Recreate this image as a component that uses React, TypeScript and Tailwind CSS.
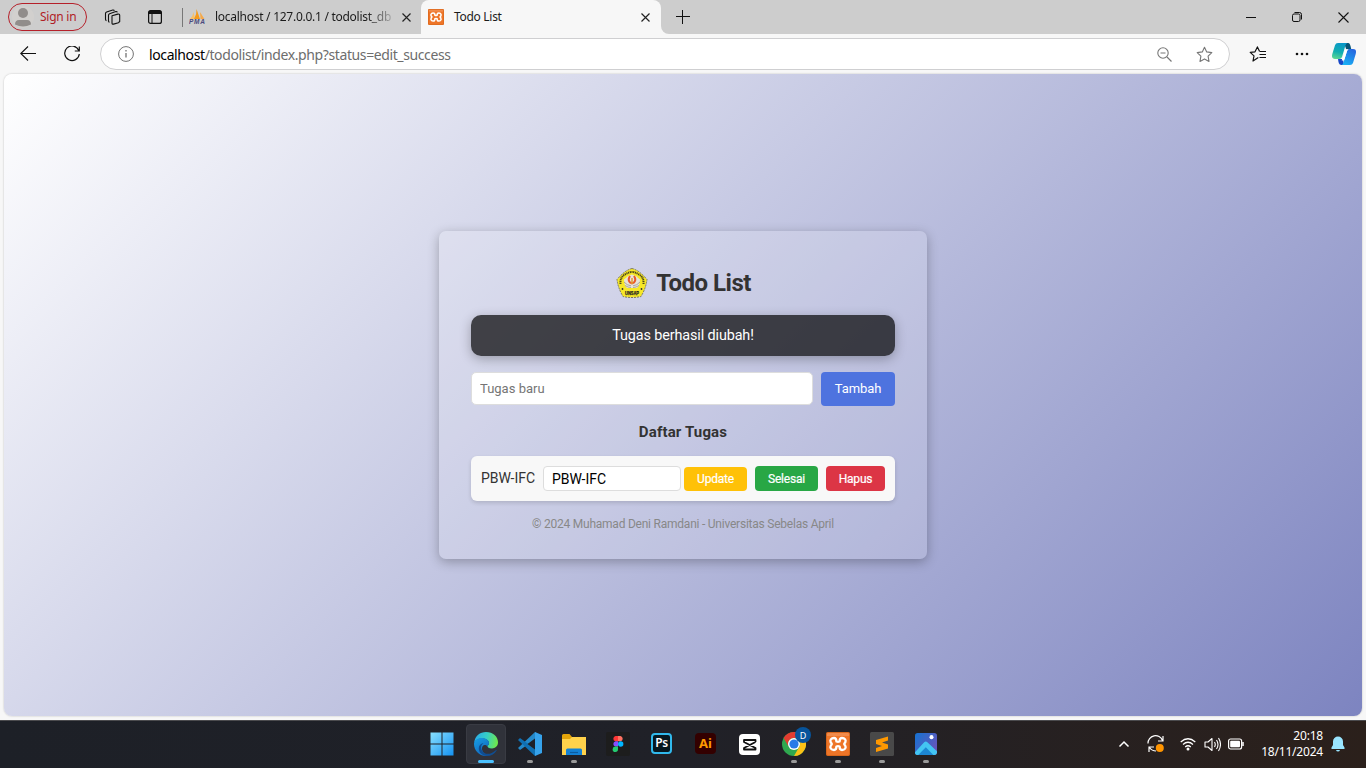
import type { ReactNode } from "react";

function Svg({ size = 24, box = 24, children, className = "" }: { size?: number; box?: number; children: ReactNode; className?: string }) {
  return (
    <svg width={size} height={size} viewBox={`0 0 ${box} ${box}`} fill="none" className={`shrink-0 ${className}`}>
      {children}
    </svg>
  );
}

function Xampp({ size }: { size: number }) {
  return (
    <Svg size={size}>
      <rect width="24" height="24" rx="2" fill="#ee7528" />
      <path d="M1 1h22v3H1Z" fill="#f39a62" opacity=".6" />
      <rect x="0.5" y="0.5" width="23" height="23" rx="1.5" stroke="#c95b12" strokeOpacity=".6" />
      <path d="M8 6C5 6 3.800 8.200 4.600 10c.4 1 1.200 1.300 1.200 2s-.8 1-1.200 2C3.800 15.800 5 18 8 18c2.300 0 2.400-2.200 2.400-3.500q1.600-.6 3.200 0C13.600 15.800 13.700 18 16 18c3 0 4.200-2.200 3.400-4-.4-1-1.200-1.300-1.200-2s.8-1 1.200-2C20.200 8.200 19 6 16 6c-2.300 0-2.400 2.200-2.400 3.500q-1.600.6-3.200 0C10.400 8.200 10.300 6 8 6Z" stroke="#fff" strokeWidth="2.300" strokeLinejoin="round" />
    </Svg>
  );
}

function Close() {
  return (
    <Svg size={9} box={9}>
      <path d="M.5.5l8 8M8.500.5l-8 8" stroke="#222" strokeWidth="1.150" />
    </Svg>
  );
}

function TabStrip() {
  return (
    <div className="flex h-[34px] bg-[#cdcdcd] text-[12px] text-[#1b1b1b]">
      <div className="flex w-[182px] items-center pl-2">
        <div className="flex h-7 w-[79px] items-center rounded-full border border-[#b5202a] pl-[3px] text-[#b01e26]">
          <Svg size={22} box={22}>
            <circle cx="11" cy="11" r="11" fill="#d2d0ce" />
            <circle cx="11" cy="7" r="5" fill="#918d8b" />
            <path d="M3 18.500q0-4.500 4-4.500h8q4 0 4 4.500-8 4-16 0Z" fill="#918d8b" />
          </Svg>
          <span className="ml-[6px] whitespace-nowrap tracking-[-0.25px]">Sign in</span>
        </div>
        <Svg size={18} box={18} className="ml-[17px]">
          <g stroke="#111" strokeWidth="1.100" strokeLinejoin="round">
            <path d="M8 7.800l5.800-1.700q1.700-.3 1.900 1.200v6.200l-1.200 1.200-5 1.400q-1.500.3-1.500-1.200Z" />
            <path d="M5.500 14.200q-1-.3-1-1.300V7.200q0-1.100 1.100-1.500l6.200-2.100q1.300-.2 1.500.8" />
            <path d="M2.500 12.600q-1-.3-1-1.300V5.600q0-1.100 1.100-1.500L8.800 2q1.300-.2 1.500.8" />
          </g>
        </Svg>
        <Svg size={14} box={14} className="ml-[26px]">
          <rect x=".6" y=".6" width="12.800" height="12.800" rx="2" stroke="#111" strokeWidth="1.200" />
          <path d="M.6 3.200V2.500Q.6.600 2.500.600h9q1.900 0 1.900 1.900v1.500H.6Z" fill="#111" />
          <path d="M4 4v9" stroke="#111" />
        </Svg>
      </div>
      <div className="flex w-[239px] items-center">
        <div className="h-[19px] w-px bg-[#777]" />
        <svg width="16" height="16" viewBox="0 0 16 16" className="ml-[6px] shrink-0">
          <path d="M1 10Q4 7 4.500 3L6 10Z" fill="#f8c16a" /><path d="M5 10Q8 5 7.500 0l3.500 10Z" fill="#f59a1c" /><path d="M11 3l4.500 7h-4Z" fill="#f5a94a" />
          <text x="0" y="15.200" textLength="16" fontFamily="Liberation Sans" fontSize="6.500" fontWeight="700" fontStyle="italic" fill="#4a4a7d">PMA</text>
        </svg>
        <span className="ml-[10px] w-[177px] whitespace-nowrap bg-linear-to-r from-[#1b1b1b] from-85% to-[#aaa] bg-clip-text tracking-[-0.27px] text-transparent">localhost / 127.0.0.1 / todolist_db</span>
        <span className="ml-[10px]"><Close /></span>
      </div>
      <div className="flex w-[240px] items-center rounded-t-lg bg-[#f7f7f7] pl-[7px]">
        <Xampp size={16} />
        <span className="ml-[10px] w-[187px] tracking-[-0.3px]">Todo List</span>
        <Close />
      </div>
      <div className="flex flex-1 items-center bg-[#f7f7f7]">
        <div className="flex h-full flex-1 items-center rounded-bl-lg bg-[#cdcdcd] pl-[15px]">
          <Svg size={14} box={14}><path d="M6.500 0v14M0 6.500h14" stroke="#111" strokeWidth="1" /></Svg>
          <div className="ml-auto flex items-center pr-[17px]">
            <Svg size={10} box={10}><path d="M0 5.500h10" stroke="#111" /></Svg>
            <Svg size={10} box={10} className="ml-[36px]">
              <rect x=".5" y="2" width="7.500" height="7.500" rx="1.500" stroke="#111" />
              <path d="M2.500.5H7.500Q9.500.5 9.500 2.500v5" stroke="#111" />
            </Svg>
            <Svg size={11} box={11} className="ml-[36px]"><path d="M.5.5l10 10M10.500.5l-10 10" stroke="#111" strokeWidth="1.100" /></Svg>
          </div>
        </div>
      </div>
    </div>
  );
}

const STAR = "M8.500 1.200l2.200 4.700 5.100.7-3.700 3.600.9 5.200-4.500-2.500L4 15.400l.9-5.200L1.200 6.600l5.100-.7Z";

function AddressBar() {
  return (
    <div className="flex h-10 items-center bg-[#f7f7f7]">
      <Svg size={16} box={16} className="ml-5"><path d="M16 7.500H.8M8 .5L.8 7.500 8 14.500" stroke="#111" strokeWidth="1.100" /></Svg>
      <Svg size={16} box={16} className="ml-7">
        <path d="M14.800 4.500A7.300 7.300 0 1 0 15.300 8M15.300.5v4.500h-4.500" stroke="#111" strokeWidth="1.200" />
      </Svg>
      <div className="ml-5 flex h-8 w-[1130px] items-center rounded-full border border-[#cfcfd1] bg-white">
        <Svg size={16} box={16} className="ml-[17px]">
          <circle cx="8" cy="8" r="7.400" stroke="#737373" />
          <path d="M8 7v4.500M8 4v1.500" stroke="#737373" strokeWidth="1.300" />
        </Svg>
        <span className="ml-[15px] whitespace-nowrap text-[14px] tracking-[-0.39px] text-[#6d6d6d]"><span className="text-black">localhost</span>/todolist/index.php?status=edit_success</span>
        <Svg size={15} box={15} className="ml-auto">
          <circle cx="6" cy="6" r="5.200" stroke="#777" strokeWidth="1.100" />
          <path d="M3.500 6h5M10 10l4.500 4.500" stroke="#777" strokeWidth="1.200" />
        </Svg>
        <Svg size={17} box={17} className="mr-[16px] ml-[24px]"><path d={STAR} stroke="#777" strokeWidth="1.100" strokeLinejoin="round" /></Svg>
      </div>
      <Svg size={17} box={17} className="ml-[19px]">
        <path d="M9.300 11.500L4 15l1-5.100L1.200 6.400l4.800-.6 2.400-4.900 2.100 4.400" stroke="#111" strokeWidth="1.200" strokeLinejoin="round" />
        <path d="M10.500 5.500H17M10.500 8.500H17M10.500 11.500H17" stroke="#111" strokeWidth="1.200" />
      </Svg>
      <Svg size={14} box={14} className="ml-[29px]">
        <g fill="#111"><circle cx="2" cy="7" r="1.300" /><circle cx="7" cy="7" r="1.300" /><circle cx="12" cy="7" r="1.300" /></g>
      </Svg>
      <Svg size={24} className="ml-[23px]">
        <defs>
          <linearGradient id="cpa" x1="6" y1="0" x2="2" y2="17" gradientUnits="userSpaceOnUse"><stop stopColor="#0896c9" /><stop offset=".55" stopColor="#12aeb0" /><stop offset="1" stopColor="#62d991" /></linearGradient>
          <linearGradient id="cpb" x1="21" y1="7" x2="12" y2="23" gradientUnits="userSpaceOnUse"><stop stopColor="#2664df" /><stop offset="1" stopColor="#18b4f5" /></linearGradient>
        </defs>
        <path d="M12 1h4.500q1.300 0 2 3l.8 3.500h-5Z" fill="#075577" />
        <path d="M6 1h9.300q-1.300.7-1.800 2.300L10 15q-.7 2-2.700 2H3Q-1 17 .3 12L3 3.200Q3.700 1 6 1Z" fill="url(#cpa)" />
        <path d="M6 17h5l1 6H9.500Q7 23 6.500 20Z" fill="#1647c7" />
        <path d="M18 23H9.500q1.500-.5 2-2.500L15 9q.7-2 2.500-2H21q4 0 2.700 5L21 21q-.7 2-3 2Z" fill="url(#cpb)" />
        <path d="M14.500 7.300h2q-1 .5-1.500 2l-2.600 8q-.4 1.200-1.700 1.300h-1l.5-1.800Q10.800 16 11.300 14.500L13 8.500q.4-1.200 1.500-1.200Z" fill="#fff" />
      </Svg>
    </div>
  );
}

function Emblem() {
  return (
    <svg width="32" height="32" viewBox="0 0 32 32" className="shrink-0">
      <path d="M16 1.500Q23 3 31 12.500 30 21 25 29.500 16 31.500 7 29.500 2 21 1 12.500 9 3 16 1.500Z" fill="#f6e727" stroke="#77745e" strokeWidth="1" strokeDasharray="2 1" />
      <path d="M4.500 17Q4 10 9 7.500q4-2.500 7-2.500t7 2.500q5 2.500 4.500 9.500" fill="none" stroke="#49451c" strokeWidth="2" strokeDasharray="1.200 .6" />
      <path d="M8 12.500q4-4 8-5 4 1 8 5 0 6-3 8.500H11q-3-2.500-3-8.500Z" fill="#e6e3da" />
      <path d="M8 15q3 3.500 7 3.800M9 18.500q3 2 6 2M24 15q-3 3.500-7 3.800M23 18.500q-3 2-6 2" stroke="#99968f" strokeWidth=".8" fill="none" />
      <path d="M14 9q-2.500 3.800 0 6.500l2 1 2-1q2.500-2.700 0-6.500" fill="none" stroke="#e9592b" strokeWidth="2" />
      <path d="M16 11v6" stroke="#df9e35" strokeWidth="1.500" />
      <circle cx="6.500" cy="22" r=".9" fill="#333" /><circle cx="25.500" cy="22" r=".9" fill="#333" />
      <text x="9" y="28" textLength="14" lengthAdjust="spacingAndGlyphs" fontSize="5" fontFamily="Liberation Sans" fontWeight="700" fill="#222" stroke="#222" strokeWidth=".25">UNSAP</text>
    </svg>
  );
}

function TodoCard() {
  return (
    <div className="flex h-[328px] w-[488px] flex-col rounded-[7px] bg-white/15 px-8 font-['Roboto',sans-serif] shadow-[0_3px_12px_rgba(0,0,0,0.28)]">
      <div className="mt-9 flex h-8 items-center justify-center gap-2 pl-px">
        <Emblem />
        <h1 className="text-[24px] font-bold tracking-[-0.5px] text-[#333]">Todo List</h1>
      </div>
      <div className="mt-4 flex h-[41px] items-center justify-center rounded-[10px] bg-black/70 text-[14.400px] tracking-[-0.12px] text-white shadow-[0_3px_12px_rgba(0,0,0,0.28)]">Tugas berhasil diubah!</div>
      <div className="mt-4 flex h-[34px] gap-2">
        <input placeholder="Tugas baru" className="h-[33px] w-[342px] rounded-[5px] border border-[#ddd] bg-white px-2 text-[13px] placeholder:text-[#757575]" />
        <button className="w-[74px] rounded-[4px] bg-[#4e73df] text-[13px] tracking-[-0.1px] text-white">Tambah</button>
      </div>
      <h2 className="mt-4 h-5 text-center text-[15px] leading-5 font-bold tracking-[0.15px] text-[#333]">Daftar Tugas</h2>
      <div className="mt-[14px] flex h-[45px] shrink-0 items-center rounded-[6px] bg-[#f8f8f8] pl-[10px] shadow-[0_2px_4px_rgba(0,0,0,0.14)]">
        <span className="w-[62px] text-[14px] text-[#333]">PBW-IFC</span>
        <input defaultValue="PBW-IFC" className="h-[25px] w-[138px] rounded-[4px] border border-[#ddd] bg-white px-2 text-[14px] text-black" />
        <button className="ml-[3px] mt-px h-6 w-[63px] rounded-[4px] bg-[#ffc107] text-[12px] tracking-[-0.2px] text-white [-webkit-text-stroke:0.2px_white]">Update</button>
        <button className="ml-2 h-[25px] w-[63px] rounded-[4px] bg-[#28a745] text-[12px] tracking-[-0.2px] text-white [-webkit-text-stroke:0.2px_white]">Selesai</button>
        <button className="ml-2 h-[25px] w-[59px] rounded-[4px] bg-[#dc3545] text-[12px] tracking-[-0.2px] text-white [-webkit-text-stroke:0.2px_white]">Hapus</button>
      </div>
      <p className="mt-[14px] text-center text-[12px] leading-[18px] tracking-[-0.23px] text-[#888]">© 2024 Muhamad Deni Ramdani - Universitas Sebelas April</p>
    </div>
  );
}

function TaskItem({ children, running = false, active = false }: { children: ReactNode; running?: boolean; active?: boolean }) {
  return (
    <div className={active ? "relative flex h-10 w-10 items-center justify-center rounded-[4px] border border-[#393b43] bg-[#30323a]" : "relative flex h-10 w-10 items-center justify-center"}>
      {children}
      {active && <span className="absolute bottom-0 h-[3px] w-4 rounded-full bg-[#4cc2ff]" />}
      {running && <span className="absolute bottom-px h-[3px] w-[6px] rounded-full bg-[#9a9a9a]" />}
    </div>
  );
}

function Taskbar() {
  return (
    <div className="flex h-12 items-center border-t border-[#4b4b4e] bg-linear-to-r from-[#1d2027] via-[#202128] to-[#2b201b] pb-px text-white">
      <div className="flex w-[946px] justify-end gap-1">
        <TaskItem>
          <Svg>
            <defs><linearGradient id="win" x1="0" y1="0" x2="24" y2="24" gradientUnits="userSpaceOnUse"><stop stopColor="#8be2ff" /><stop offset="1" stopColor="#1290f1" /></linearGradient></defs>
            <path d="M.5.5h11v11H.5ZM12.500.5h11v11h-11ZM.5 12.500h11v11H.5ZM12.500 12.500h11v11h-11Z" fill="url(#win)" />
          </Svg>
        </TaskItem>
        <TaskItem active>
          <Svg>
            <defs>
              <linearGradient id="edg" x1="1" y1="6" x2="23" y2="11" gradientUnits="userSpaceOnUse"><stop stopColor="#2aaee8" /><stop offset=".5" stopColor="#36cec5" /><stop offset="1" stopColor="#6ee84c" /></linearGradient>
              <linearGradient id="edb" x1="2" y1="8" x2="13" y2="24" gradientUnits="userSpaceOnUse"><stop stopColor="#1697df" /><stop offset="1" stopColor="#1261b8" /></linearGradient>
            </defs>
            <path d="M.2 10.500C1 4 6 0 12 0c7 0 12 4.800 12 10.300 0 4-3 6.200-6 6.200-3.200 0-4.500-1.200-4.500-2.200 0-.8 1.500-1.500 1.500-3.300C15 8.500 12 6.500 8 6.500c-4 0-6.800 2-7.800 4Z" fill="url(#edg)" />
            <path d="M0 12C0 8.500 3.500 6 7.500 6c4.500 0 7.500 2.300 7.500 5 0 2-1.500 2.300-1.500 3.500C10.500 11 7.500 14 8 17.500c.4 3 3 5.300 6 6.200C6 25 0 19 0 12Z" fill="url(#edb)" />
            <path d="M9.500 11q-4 3-1.500 7.500c3 5 9 4 13.800-.3.500-.5 1 0 .7.500C19 24.500 11 25.500 7 21.500 3.500 18 4 12 9.500 11Z" fill="#104d91" />
          </Svg>
        </TaskItem>
        <TaskItem running>
          <Svg>
            <path d="M17 0L0 16l2 2L20 5.200Z" fill="#2489ca" />
            <path d="M17 24L0 8l2-2 18 13Z" fill="#1070b3" />
            <path d="M17 0l7 3v18l-7 3V0Z" fill="#36a3ec" /><path d="M17 6.500L9.500 12l7.500 5.500Z" fill="#1e2129" />
          </Svg>
        </TaskItem>
        <TaskItem running>
          <Svg>
            <path d="M0 3.500Q0 2 1.500 2h6L10 5h12.500Q24 5 24 6.500V14H0Z" fill="#e3a40a" />
            <path d="M0 7h8l2-2h14v18H0Z" fill="#ffd24b" /><path d="M4 23v-5q0-1.500 1.500-1.500h13q1.500 0 1.500 1.500v5Z" fill="#1381d4" /><path d="M8 20.500h8" stroke="#0b5b9f" strokeWidth="1.200" />
          </Svg>
        </TaskItem>
        <TaskItem>
          <Svg>
            <rect width="24" height="24" rx="2" fill="#1d1d1d" />
            <path d="M12 4H9.500a2.700 2.700 0 0 0 0 5.300H12Z" fill="#ff3737" /><path d="M12 4h2.500a2.700 2.700 0 0 1 0 5.300H12Z" fill="#ff7262" />
            <path d="M12 9.300H9.500a2.700 2.700 0 0 0 0 5.300H12Z" fill="#874fff" /><circle cx="14.700" cy="12" r="2.700" fill="#00b6ff" />
            <path d="M12 14.600H9.500a2.700 2.700 0 1 0 2.500 2.700Z" fill="#24cb71" />
          </Svg>
        </TaskItem>
        <TaskItem>
          <span className="mr-px mb-[2px] flex h-[21px] w-[21px] items-center justify-center rounded-[4px] border-2 border-[#31b9ec] bg-[#071820] text-[12px] leading-none font-semibold tracking-[-0.3px]">Ps</span>
        </TaskItem>
        <TaskItem>
          <span className="mr-px mb-px flex h-[21px] w-[21px] items-center justify-center rounded-[4px] bg-[#330000] text-[13px] leading-none font-bold text-[#ff9a00]">Ai</span>
        </TaskItem>
        <TaskItem>
          <Svg size={21} box={21} className="mr-px">
            <rect width="21" height="21" rx="4" fill="#fff" />
            <path d="M16.500 8V6H5v2l11.500 6v1.500H5V14l11.500-6" stroke="#111" strokeWidth="1.800" strokeLinejoin="round" />
          </Svg>
        </TaskItem>
        <TaskItem running>
          <Svg>
            <circle cx="12" cy="12" r="12" fill="#2fa84f" />
            <path d="M1.600 6A12 12 0 0 1 22.400 6H12a6 6 0 0 0-5.200 9Z" fill="#e23c30" />
            <path d="M22.400 6A12 12 0 0 1 12 24l5.200-9A6 6 0 0 0 17 8.500L22.400 6Z" fill="#fbc116" />
            <circle cx="12" cy="12" r="6" fill="#fff" /><circle cx="12" cy="12" r="4.600" fill="#297be8" />
          </Svg>
          <span className="absolute top-[3px] left-[21px] flex h-4 w-4 items-center justify-center rounded-full bg-[#07549b] text-[9px] leading-none">D</span>
        </TaskItem>
        <TaskItem running><Xampp size={24} /></TaskItem>
        <TaskItem running>
          <Svg>
            <rect width="24" height="24" rx="1.500" fill="#494949" />
            <path d="M18 4.500v4l-6 2 6 1.900v4L6 20v-4l6-2-6-1.900v-4Z" fill="#ff9800" />
          </Svg>
        </TaskItem>
        <TaskItem running>
          <Svg size={22}>
            <defs><linearGradient id="ph" x1="0" y1="0" x2="24" y2="16" gradientUnits="userSpaceOnUse"><stop stopColor="#1473d2" /><stop offset="1" stopColor="#6755ba" /></linearGradient></defs>
            <rect width="24" height="24" rx="3" fill="url(#ph)" />
            <path d="M0 21L10 10q1.800-1.700 3.500 0L24 20v1.500Q23.500 24 21 24H3Q.5 24 0 22Z" fill="#43c5f2" />
            <path d="M3.500 24l8.300-8.500L20 24Z" fill="#1c86d2" /><circle cx="18" cy="4.500" r="2.200" fill="#fff" />
          </Svg>
        </TaskItem>
      </div>
      <div className="ml-auto flex items-center pr-5">
        <Svg size={12} box={12}><path d="M1.500 8.500L6 4l4.500 4.500" stroke="#fff" strokeWidth="1.500" /></Svg>
        <Svg size={18} box={18} className="ml-[17px]">
          <path d="M1 8.500A7.500 7.500 0 0 1 15.500 5.500M16 1v5h-5M2 17v-5h5M2.500 12.500Q5 16 9 16" stroke="#fff" strokeWidth="1.200" />
          <circle cx="12.800" cy="13" r="4" fill="#ff9500" />
        </Svg>
        <Svg size={16} box={16} className="ml-[15px]">
          <path d="M.7 6Q8-.5 15.300 6M3 8.500q5-4.500 10 0M5.200 11q2.800-2.500 5.600 0" stroke="#fff" strokeWidth="1.200" />
          <circle cx="8" cy="13" r="1.500" fill="#fff" />
        </Svg>
        <Svg size={17} box={17} className="ml-2">
          <path d="M1 6h3l4-3.500v12L4 11H1ZM10.500 6q1.500 2.500 0 5M12.500 4q3 4.500 0 9M14.500 2q4 6.500 0 13" stroke="#fff" strokeWidth="1.100" strokeLinejoin="round" />
        </Svg>
        <svg width="17" height="12" viewBox="0 0 17 12" className="ml-[7px]">
          <rect x=".6" y="1" width="13" height="10" rx="2" stroke="#fff" strokeWidth="1.200" fill="none" /><rect x="2.200" y="2.700" width="9.800" height="6.600" rx="1" fill="#fff" /><path d="M15 4v4" stroke="#fff" strokeWidth="1.500" />
        </svg>
        <div className="ml-[14px] w-[64px] text-right text-[12px] leading-4 tracking-[-0.2px] whitespace-nowrap"><div>20:18</div><div>18/11/2024</div></div>
        <Svg size={16} box={16} className="ml-[7px]">
          <path d="M8 .5a5 5 0 0 0-5 5V9l-1.500 2.500V13h13v-1.500L13 9V5.500A5 5 0 0 0 8 .5Z" fill="#99e5ff" /><path d="M6 14h4q-.5 1.500-2 1.500T6 14Z" fill="#99e5ff" />
        </Svg>
      </div>
    </div>
  );
}

export default function App() {
  return (
    <div className="flex h-screen w-full flex-col overflow-hidden bg-[#f7f7f7] font-['Noto_Sans',sans-serif]">
      <TabStrip />
      <AddressBar />
      <main className="mx-1 flex h-[642px] items-center justify-center rounded-lg bg-[linear-gradient(135deg,#ffffff,#7d84c0)] shadow-[0_0_2px_rgba(0,0,0,0.25)]">
        <TodoCard />
      </main>
      <div className="h-1 shrink-0" />
      <Taskbar />
    </div>
  );
}
